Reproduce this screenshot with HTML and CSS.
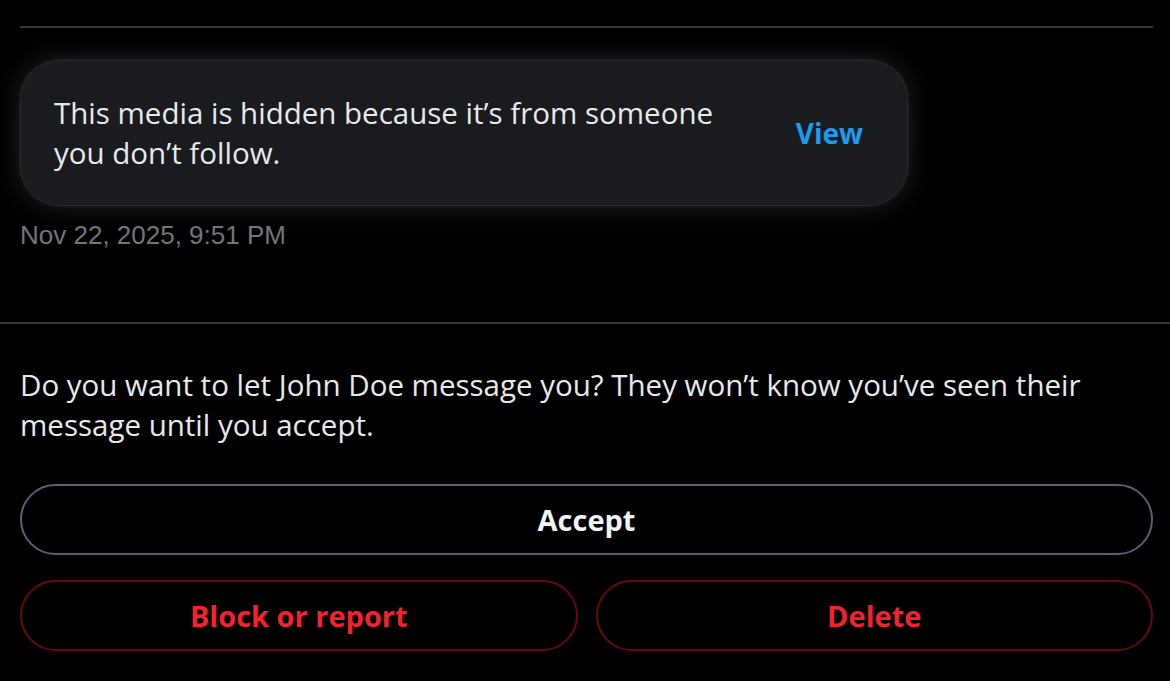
FILE: index.html
```html
<!DOCTYPE html>
<html lang="en">
<head>
<meta charset="utf-8">
<title>Message request</title>
<link rel="stylesheet" href="styles.css">
</head>
<body>
<div class="page">
  <section class="conversation">
    <div class="top-rule"></div>
    <div class="message">
      <div class="bubble">
        <p class="bubble-text">This media is hidden because it’s from someone you don’t follow.</p>
        <span class="view-link">View</span>
      </div>
      <div class="timestamp">Nov 22, 2025, 9:51 PM</div>
    </div>
  </section>
  <section class="request">
    <p class="request-text">Do you want to let John Doe message you? They won’t know you’ve seen their message until you accept.</p>
    <div class="actions">
      <button class="btn btn-accept">Accept</button>
      <div class="actions-row">
        <button class="btn btn-danger">Block or report</button>
        <button class="btn btn-danger">Delete</button>
      </div>
    </div>
  </section>
</div>
</body>
</html>
```
FILE: styles.css
```css
html, body {
  margin: 0;
  padding: 0;
  background: #000;
}

body {
  width: 1170px;
  height: 681px;
  overflow: hidden;
  font-family: "Open Sans", "Noto Sans", sans-serif;
  color: #e7e9ea;
}

.page {
  display: flex;
  flex-direction: column;
}

.conversation {
  padding: 26px 17px 0 20px;
  display: flex;
  flex-direction: column;
  border-bottom: 2px solid #333639;
  height: 296px;
}

.top-rule {
  height: 2px;
  background: #36383b;
}

.message {
  margin-top: 32px;
  display: flex;
  flex-direction: column;
}

.bubble {
  box-sizing: border-box;
  width: 888px;
  height: 146px;
  background: #1a1b1e;
  border: 1px solid #26282c;
  border-radius: 40px;
  box-shadow: 0 0 26px rgba(255, 255, 255, 0.14), 0 0 3px 1px rgba(255, 255, 255, 0.05);
  display: flex;
  align-items: center;
  justify-content: space-between;
  padding: 0 44px 0 33px;
}

.bubble-text {
  margin: 0;
  width: 690px;
  font-size: 29.5px;
  line-height: 40px;
  color: #e7e9ea;
}

.view-link {
  font-size: 28px;
  font-weight: 700;
  color: #1d9bf0;
  line-height: 40px;
}

.timestamp {
  margin-top: 13px;
  font-family: "Liberation Sans", Arial, sans-serif;
  font-size: 26px;
  line-height: 32px;
  color: #71767b;
}

.request {
  padding: 41px 17px 0 20px;
  display: flex;
  flex-direction: column;
}

.request-text {
  margin: 0;
  font-size: 29.5px;
  line-height: 40px;
  color: #e7e9ea;
}

.actions {
  margin-top: 39px;
  display: flex;
  flex-direction: column;
  gap: 25px;
}

.actions-row {
  display: flex;
  gap: 18px;
}

.btn {
  box-sizing: border-box;
  height: 71px;
  border-radius: 999px;
  background: transparent;
  font-family: "Open Sans", "Noto Sans", sans-serif;
  font-size: 29px;
  font-weight: 700;
  cursor: pointer;
  padding: 0;
}

.btn-accept {
  width: 100%;
  border: 2px solid #536471;
  color: #eff3f4;
}

.btn-danger {
  flex: 1;
  border: 2px solid #67070f;
  color: #f4212e;
}
```
